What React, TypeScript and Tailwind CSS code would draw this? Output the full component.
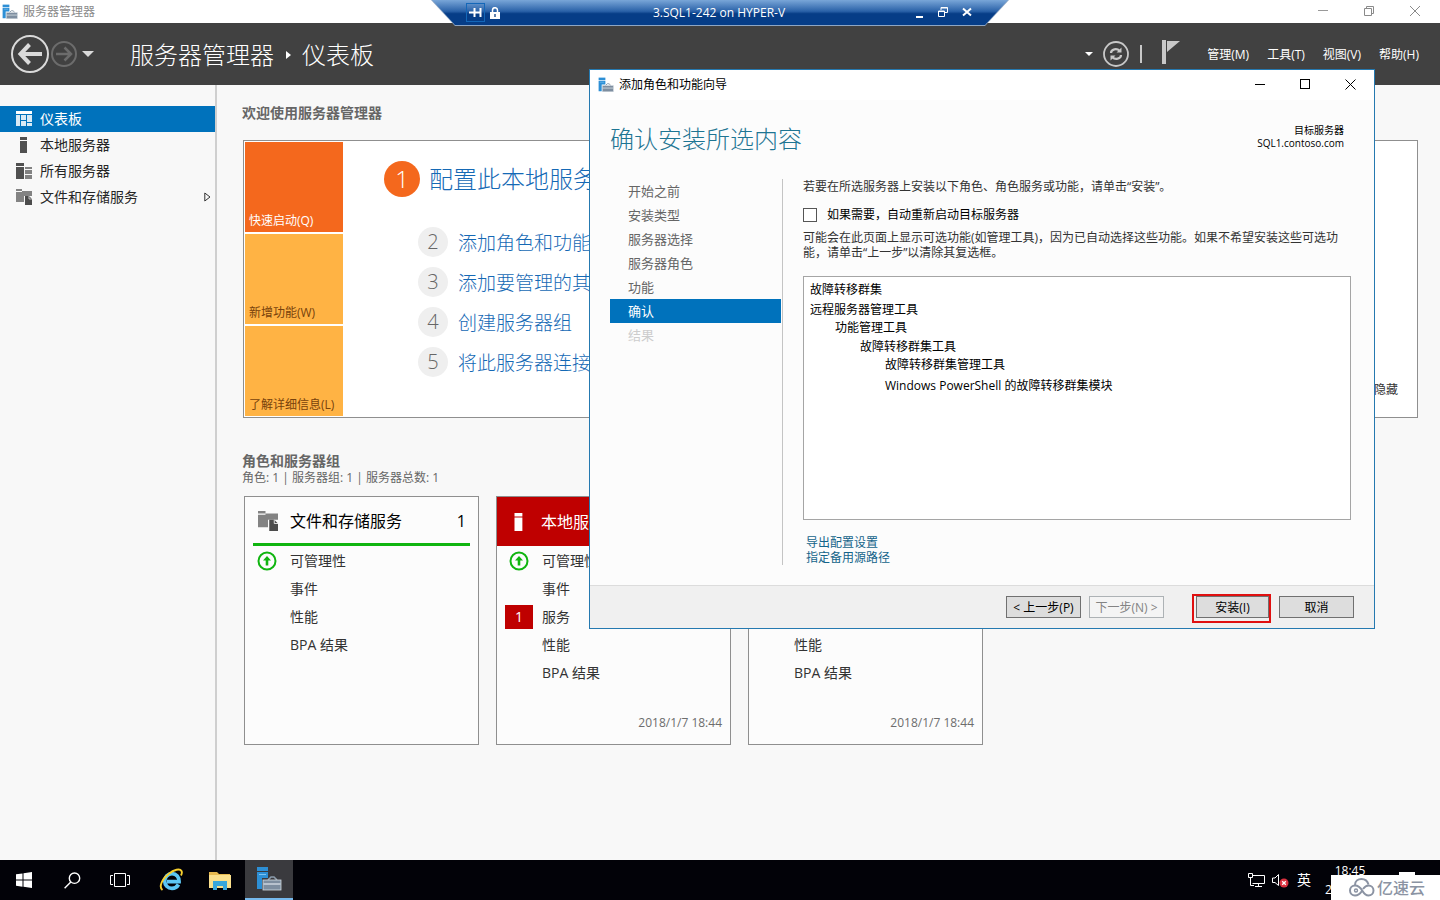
import React from 'react';
import clsx from 'clsx';

interface IconProps {
  className?: string;
}

interface Role {
  title: string;
  count: number;
  icon: 'folder' | 'server' | 'servers';
  failing?: boolean;
  rows: { label: string; status?: 'ok' | number }[];
  updatedAt?: string;
}

const sidebarItems = [
  { label: '仪表板', icon: 'dashboard', active: true },
  { label: '本地服务器', icon: 'server' },
  { label: '所有服务器', icon: 'servers' },
  { label: '文件和存储服务', icon: 'folder', expandable: true },
];

const menus = ['管理(M)', '工具(T)', '视图(V)', '帮助(H)'];

const quickSteps = ['添加角色和功能', '添加要管理的其他服务器', '创建服务器组', '将此服务器连接到云服务'];

const roles: Role[] = [
  {
    title: '文件和存储服务',
    count: 1,
    icon: 'folder',
    rows: [{ label: '可管理性', status: 'ok' }, { label: '事件' }, { label: '性能' }, { label: 'BPA 结果' }],
  },
  {
    title: '本地服务器',
    count: 1,
    icon: 'server',
    failing: true,
    rows: [
      { label: '可管理性', status: 'ok' },
      { label: '事件' },
      { label: '服务', status: 1 },
      { label: '性能' },
      { label: 'BPA 结果' },
    ],
    updatedAt: '2018/1/7 18:44',
  },
  {
    title: '所有服务器',
    count: 1,
    icon: 'servers',
    failing: true,
    rows: [
      { label: '可管理性', status: 'ok' },
      { label: '事件' },
      { label: '服务', status: 1 },
      { label: '性能' },
      { label: 'BPA 结果' },
    ],
    updatedAt: '2018/1/7 18:44',
  },
];

const wizardSteps = ['开始之前', '安装类型', '服务器选择', '服务器角色', '功能', '确认', '结果'];

const selections = [
  { label: '故障转移群集', className: '' },
  { label: '远程服务器管理工具', className: 'mt-0.5' },
  { label: '功能管理工具', className: 'pl-[25px]' },
  { label: '故障转移群集工具', className: 'pl-[50px] mt-px' },
  { label: '故障转移群集管理工具', className: 'pl-[75px]' },
  { label: 'Windows PowerShell 的故障转移群集模块', className: 'pl-[75px] mt-[3px]' },
];

function ServerManagerIcon({ className }: IconProps) {
  return (
    <svg viewBox="0 0 26 26" className={className} aria-hidden="true">
      <rect x="1" y="1" width="11" height="4" fill="#2d8fd5" />
      <path d="M1 6h11v6H6v11H1z" fill="#2d8fd5" />
      <path d="M3 8.500h7" stroke="#7cc3f2" />
      <path d="M12 14l3-3h3l3 3" fill="none" stroke="#8c9cac" strokeWidth="1.600" />
      <rect x="7" y="14" width="18" height="10" fill="#7e8ea0" stroke="#d3dbe2" strokeWidth="0.800" />
      <path d="M7.500 18h17" stroke="#dfe6ec" strokeWidth="1.200" />
    </svg>
  );
}

function NodeIcon({ name, className }: IconProps & { name: string }) {
  if (name === 'dashboard') {
    return (
      <svg viewBox="0 0 16 16" className={className} fill="currentColor" aria-hidden="true">
        <path d="M0 0h16v3H0z" />
        <path d="M0 4h4v11H0zM5 4h5v5H5zM5 10h5v5H5zM11 4h5v7h-5zM11 12h5v3h-5z" opacity=".85" />
      </svg>
    );
  }
  if (name === 'server') {
    return (
      <svg viewBox="0 0 16 16" className={className} fill="currentColor" aria-hidden="true">
        <path d="M4 0h7v3H4zM4 4h7v12H4z" />
      </svg>
    );
  }
  if (name === 'servers') {
    return (
      <svg viewBox="0 0 16 16" className={className} fill="currentColor" aria-hidden="true">
        <path d="M0 0h8v3H0zM0 4h8v12H0z" />
        <path d="M9 4h7v2H9zM9 7h7v4H9zM9 12h7v4H9z" opacity=".7" />
      </svg>
    );
  }
  return (
    <svg viewBox="0 0 16 16" className={className} aria-hidden="true">
      <path d="M0 0h6v2H0zM0 3h6V2h10v5H8v6H0z" fill="#838383" />
      <path d="M9 7h4l3 3v6H9z" fill="#4c4c4c" />
      <path d="M13 7v3h3" fill="none" stroke="#f0f0f0" strokeWidth=".7" />
    </svg>
  );
}

function OkIcon() {
  return (
    <svg viewBox="0 0 20 20" className="h-5 w-5" fill="none" aria-hidden="true">
      <circle cx="10" cy="10" r="8.500" stroke="#10b510" strokeWidth="2" />
      <path d="M10 5l4 4.500h-2.700V14.500H8.700V9.500H6z" fill="#10b510" />
    </svg>
  );
}

function ConnectionBar() {
  return (
    <div className="absolute left-1/2 top-0 z-20 h-[26px] w-[578px] -translate-x-1/2 bg-[#8ea6c4] [clip-path:polygon(0_0,100%_0,calc(100%-24px)_100%,24px_100%)]">
      <div className="flex h-[25px] items-center bg-linear-to-b from-[#79a6d8] from-0% via-[#2a62a8] via-45% to-[#063d87] to-55% pl-[35px] pr-[37px] text-white [clip-path:polygon(1px_0,calc(100%-1px)_0,calc(100%-24px)_100%,24px_100%)]">
        <button aria-label="固定" className="flex h-[19px] w-[19px] items-center justify-center border border-[#1467b8]">
          <svg viewBox="0 0 13 11" className="h-[11px] w-[13px]" stroke="currentColor" strokeWidth="2" fill="none">
            <path d="M0 5.500h5M5.500 1v9M5.500 5.500h5M11.500 1v9" />
          </svg>
        </button>
        <svg viewBox="0 0 10 12" className="ml-[5px] h-3 w-2.5" aria-hidden="true">
          <path d="M2.500 6V3.200a2.500 2.500 0 015 0V6" fill="none" stroke="#fff" strokeWidth="1.500" />
          <path d="M0 5h10v7H0z" fill="#fff" />
          <path d="M4.300 7h1.400v3H4.300z" fill="#1d4d8c" />
        </svg>
        <span className="flex-1 pl-[22px] text-center text-xs">3.SQL1-242 on HYPER-V</span>
        <div className="flex items-center gap-3.5 pb-0.5">
          <button aria-label="最小化" className="flex h-3 w-2 items-end">
            <span className="h-0.5 w-[7px] bg-white" />
          </button>
          <button aria-label="还原">
            <svg viewBox="0 0 10 10" className="h-2.5 w-2.5" fill="none" stroke="currentColor">
              <path d="M3 3V.500h6.500v5H7" />
              <path d="M.500 4h6v5.500h-6zM3 1h6.500M.500 4.500h6" />
            </svg>
          </button>
          <button aria-label="关闭">
            <svg viewBox="0 0 10 10" className="h-2.5 w-2.5" stroke="currentColor" strokeWidth="2">
              <path d="M1 1.500l8 7M9 1.500l-8 7" />
            </svg>
          </button>
        </div>
      </div>
    </div>
  );
}

function TitleBar() {
  return (
    <div className="flex h-[23px] items-center bg-white pl-0.5 pr-5 text-[#8a8a8a]">
      <ServerManagerIcon className="h-4 w-4" />
      <span className="ml-[5px] flex-1 text-xs">服务器管理器</span>
      <div className="flex items-center gap-9 pb-0.5">
        <button aria-label="最小化" className="flex h-2.5 w-2.5 items-center">
          <span className="h-px w-2.5 bg-[#999]" />
        </button>
        <button aria-label="还原">
          <svg viewBox="0 0 10 10" className="h-2.5 w-2.5" fill="none" stroke="currentColor">
            <path d="M2.500 2V.500h7v7H8M.500 2.500h7v7h-7z" />
          </svg>
        </button>
        <button aria-label="关闭">
          <svg viewBox="0 0 10 10" className="h-2.5 w-2.5" stroke="currentColor">
            <path d="M0 0l10 10M10 0L0 10" />
          </svg>
        </button>
      </div>
    </div>
  );
}

function Header() {
  return (
    <header className="flex h-[62px] items-center bg-[#414141] pl-[11px] pr-[21px] text-white">
      <button aria-label="后退">
        <svg viewBox="0 0 38 38" className="h-[38px] w-[38px]" fill="none" stroke="#dadada">
          <circle cx="19" cy="19" r="18" strokeWidth="2" />
          <path d="M9 19h22" strokeWidth="4" />
          <path d="M18.500 9.500L9.500 19l9 9.500" strokeWidth="4" />
        </svg>
      </button>
      <button aria-label="前进" className="ml-0.5">
        <svg viewBox="0 0 26 26" className="h-[26px] w-[26px]" fill="none" stroke="#6c6c6c">
          <circle cx="13" cy="13" r="12" strokeWidth="2" />
          <path d="M5 13h15M13.500 6.500L20 13l-6.500 6.500" strokeWidth="2.500" />
        </svg>
      </button>
      <button aria-label="历史记录" className="ml-[5px]">
        <svg viewBox="0 0 12 6" className="h-1.5 w-3" fill="#dadada">
          <path d="M0 0h12L6 6z" />
        </svg>
      </button>
      <div className="ml-9 flex flex-1 items-center pt-0.5 text-2xl font-light">
        <span>服务器管理器</span>
        <svg viewBox="0 0 5 8" className="ml-3 mr-[11px] h-2 w-[5px]" fill="currentColor" aria-hidden="true">
          <path d="M0 0l5 4-5 4z" />
        </svg>
        <h1>仪表板</h1>
      </div>
      <svg viewBox="0 0 8 4" className="h-1 w-2" fill="currentColor" aria-hidden="true">
        <path d="M0 0h8L4 4z" />
      </svg>
      <button aria-label="刷新" className="ml-2.5">
        <svg viewBox="0 0 26 26" className="h-[26px] w-[26px]" fill="none" stroke="#c8c8c8">
          <circle cx="13" cy="13" r="12" strokeWidth="1.800" />
          <path d="M8 12c0-4 6-5 8.500-2.200M18 14c0 4-6 5-8.500 2.200" strokeWidth="2.200" />
          <path d="M18.500 6.500v5h-5zM7.500 19.500v-5h5z" fill="#c8c8c8" stroke="none" />
        </svg>
      </button>
      <span className="ml-[11px] h-[18px] w-0.5 bg-[#c8c8c8]" />
      <button aria-label="通知" className="ml-5 pb-1">
        <svg viewBox="0 0 18 24" className="h-6 w-[18px]" fill="#c8c8c8">
          <path d="M0 0h4v24H0zM5 1h13L5 12z" />
        </svg>
      </button>
      <nav className="ml-[27px] flex gap-[18px] pt-0.5 text-xs">
        {menus.map((menu) => (
          <button key={menu}>{menu}</button>
        ))}
      </nav>
    </header>
  );
}

function Sidebar() {
  return (
    <aside className="w-[217px] flex-shrink-0 border-r-2 border-[#cfcfcf] pt-[21px]">
      {sidebarItems.map((item) => (
        <a
          key={item.label}
          href="#"
          className={clsx(
            'flex h-[26px] items-center pl-4 pr-1 text-sm',
            item.active ? 'bg-[#0072bc] text-white' : 'text-[#262626]'
          )}
        >
          <NodeIcon name={item.icon} className={clsx('h-4 w-4', !item.active && 'text-[#505050]')} />
          <span className="ml-2 flex-1">{item.label}</span>
          {item.expandable && (
            <svg viewBox="0 0 7 10" className="h-2.5 w-[7px]" fill="none" stroke="#333" aria-hidden="true">
              <path d="M.800 1L6 5 .800 9z" />
            </svg>
          )}
        </a>
      ))}
    </aside>
  );
}

function WelcomePanel() {
  return (
    <div className="ml-px mt-4 flex border border-[#8f8f8f] bg-white p-px">
      <div className="flex w-[98px] flex-shrink-0 flex-col gap-0.5 text-xs">
        <button className="flex h-[90px] items-end bg-[#f4681d] px-1 pb-[3px] text-left text-white">快速启动(Q)</button>
        <button className="flex h-[90px] items-end bg-[#ffb344] px-1 pb-[3px] text-left text-[#77420c]">新增功能(W)</button>
        <button className="flex h-[90px] items-end bg-[#ffb344] px-1 pb-[3px] text-left text-[#77420c]">
          了解详细信息(L)
        </button>
      </div>
      <div className="ml-[41px] flex-1 pt-[19px] font-light text-[#1569b5]">
        <div className="flex items-center">
          <span className="flex h-9 w-9 items-center justify-center rounded-full bg-[#f4681d] text-2xl text-white">1</span>
          <a href="#" className="ml-[9px] text-2xl">
            配置此本地服务器
          </a>
        </div>
        <ol className="ml-[34px] mt-[30px] space-y-2.5">
          {quickSteps.map((step, index) => (
            <li key={step} className="flex h-[30px] items-center">
              <span className="flex h-[30px] w-[30px] items-center justify-center rounded-full bg-[#efefef] text-xl text-[#666]">
                {index + 2}
              </span>
              <a href="#" className="ml-2.5 pt-0.5 text-[19px]">
                {step}
              </a>
            </li>
          ))}
        </ol>
      </div>
      <button className="mb-[18px] mr-[18px] self-end text-xs text-[#333]">隐藏</button>
    </div>
  );
}

function RoleCard({ role }: { role: Role }) {
  return (
    <section className="flex h-[249px] w-[235px] flex-shrink-0 flex-col border border-[#8f8f8f] bg-[#fcfcfc]">
      <div
        className={clsx(
          'flex items-center',
          role.failing
            ? 'h-[49px] bg-[#bf0000] px-3 text-white'
            : 'mx-2 h-[49px] border-b-[3px] border-[#10b510] pl-[5px] pr-1 pt-0.5 text-black'
        )}
      >
        <NodeIcon name={role.icon} className={role.icon === 'folder' ? 'h-5 w-5' : 'h-[18px] w-5'} />
        <h3 className="ml-3 flex-1 text-base">{role.title}</h3>
        <span className="text-base">{role.count}</span>
      </div>
      <ul className="flex-1 px-2 pt-px text-sm text-[#333]">
        {role.rows.map((row) => (
          <li key={row.label} className="flex h-7 items-center">
            <span className="flex w-7 justify-center">
              {row.status === 'ok' && <OkIcon />}
              {typeof row.status === 'number' && (
                <span className="flex h-6 w-7 items-center justify-center bg-[#bf0000] text-white">{row.status}</span>
              )}
            </span>
            <span className="ml-[9px]">{row.label}</span>
          </li>
        ))}
      </ul>
      {role.updatedAt && <p className="pb-[13px] pr-2 text-right text-xs leading-4 text-[#6d6d6d]">{role.updatedAt}</p>}
    </section>
  );
}

function AddRolesWizard() {
  return (
    <div
      role="dialog"
      aria-label="添加角色和功能向导"
      className="absolute right-[65px] top-[69px] z-10 flex h-[560px] w-[786px] flex-col border border-[#2579b0] bg-[#fcfcfc] text-xs text-black"
    >
      <div className="flex h-[30px] flex-shrink-0 items-center bg-white pl-2 pr-[18px]">
        <ServerManagerIcon className="h-4 w-4" />
        <span className="ml-[5px] flex-1">添加角色和功能向导</span>
        <div className="flex items-center gap-[35px] pb-0.5">
          <button aria-label="最小化" className="flex h-2.5 w-2.5 items-center">
            <span className="h-px w-2.5 bg-black" />
          </button>
          <button aria-label="最大化" className="h-2.5 w-2.5 border border-black" />
          <button aria-label="关闭">
            <svg viewBox="0 0 11 11" className="h-[11px] w-[11px]" stroke="currentColor">
              <path d="M.500.500l10 10M10.500.500l-10 10" />
            </svg>
          </button>
        </div>
      </div>

      <div className="flex items-start justify-between pl-5 pr-[30px]">
        <h2 className="pt-[23px] text-2xl font-light text-[#1e7593]">确认安装所选内容</h2>
        <div className="pt-6 text-right">
          <p className="text-[10px] leading-[13px]">目标服务器</p>
          <p className="text-[10px] leading-[13px]">SQL1.contoso.com</p>
        </div>
      </div>

      <div className="mt-6 flex flex-1 pb-5 pl-5 pr-[23px]">
        <ol className="w-[173px] flex-shrink-0 border-r border-[#c4c4c4] pr-px text-[13px] text-[#666]">
          {wizardSteps.map((step) => (
            <li
              key={step}
              className={clsx(
                'flex h-6 items-center pl-[18px] pt-0.5',
                step === '确认' && 'bg-[#0072bc] text-white',
                step === '结果' && 'text-[#cdcdcd]'
              )}
            >
              {step}
            </li>
          ))}
        </ol>
        <div className="ml-5 flex flex-1 flex-col text-[#333]">
          <p className="leading-[15px]">若要在所选服务器上安装以下角色、角色服务或功能，请单击“安装”。</p>
          <label className="mt-3 flex h-[17px] items-center text-black">
            <input type="checkbox" className="h-3.5 w-3.5 appearance-none border border-[#555] bg-white" />
            <span className="ml-2.5">如果需要，自动重新启动目标服务器</span>
          </label>
          <p className="mt-[7px] pr-2 leading-[15px]">
            可能会在此页面上显示可选功能(如管理工具)，因为已自动选择这些功能。如果不希望安装这些可选功能，请单击“上一步”以清除其复选框。
          </p>
          <ul className="mt-4 h-[244px] border border-[#a5a5a5] bg-white px-1.5 py-1 leading-[18px] text-black">
            {selections.map((item) => (
              <li key={item.label} className={item.className}>
                {item.label}
              </li>
            ))}
          </ul>
          <div className="ml-[3px] mt-[15px] flex flex-col items-start leading-[15px] text-[#14648a]">
            <a href="#">导出配置设置</a>
            <a href="#">指定备用源路径</a>
          </div>
        </div>
      </div>

      <footer className="flex h-[43px] flex-shrink-0 items-start justify-end border-t border-[#dcdcdc] bg-[#f0f0f0] pr-5 pt-2">
        <button className="mt-0.5 h-[22px] w-[75px] border border-[#707070] bg-[#dddddd] pt-0.5">&lt; 上一步(P)</button>
        <button
          disabled
          className="ml-2 mt-0.5 h-[22px] w-[75px] border border-[#adb2b5] bg-[#f4f4f4] pt-0.5 text-[#838383]"
        >
          下一步(N) &gt;
        </button>
        <div className="ml-7 h-[29px] w-[79px] border-2 border-[#e01010] pl-0.5">
          <button className="h-[22px] w-full border border-[#707070] bg-[#dddddd] pt-0.5">安装(I)</button>
        </div>
        <button className="ml-2 mt-0.5 h-[22px] w-[75px] border border-[#707070] bg-[#dddddd] pt-0.5">取消</button>
      </footer>
    </div>
  );
}

function Taskbar() {
  return (
    <div className="flex h-10 flex-shrink-0 items-center bg-[#020208] text-white">
      <button aria-label="开始" className="flex h-10 w-12 items-center justify-center">
        <svg viewBox="0 0 16 16" className="h-4 w-4" fill="currentColor">
          <path d="M0 2.300L6.500 1.400v6.200H0zM7.500 1.200L16 0v7.600H7.500zM0 8.500h6.500v6.200L0 13.800zM7.500 8.500H16V16l-8.500-1.200z" />
        </svg>
      </button>
      <button aria-label="搜索" className="flex h-10 w-12 items-center justify-center">
        <svg viewBox="0 0 17 17" className="h-[17px] w-[17px]" fill="none" stroke="currentColor" strokeWidth="1.400">
          <circle cx="10.500" cy="6.200" r="5.200" />
          <path d="M6.800 10L.600 16.300" />
        </svg>
      </button>
      <button aria-label="任务视图" className="flex h-10 w-12 items-center justify-center">
        <svg viewBox="0 0 20 14" className="h-3.5 w-5" fill="none" stroke="currentColor">
          <path d="M4.500.500h11v13h-11zM3 2.500H.500v9H3M17 2.500h2.500v9H17" />
        </svg>
      </button>
      <button aria-label="Internet Explorer" className="flex h-10 w-[54px] items-center justify-center">
        <svg viewBox="0 0 24 24" className="h-6 w-6" fill="none">
          <path d="M19.500 16.500c-1.300 2.400-3.700 3.800-6.500 3.800-4.300 0-7.300-3.200-7.300-7.200S8.800 5.700 13 5.700c4.400 0 7.300 3.200 7.100 8H8" stroke="#5cc8f5" strokeWidth="3.700" />
          <path d="M3.500 22C-.500 19 3 11 9.500 6 15 1.500 21 .300 22.500 3c.700 1.300.300 3-.500 4.500" stroke="#f6cf2e" strokeWidth="1.900" />
        </svg>
      </button>
      <button aria-label="文件资源管理器" className="flex h-10 w-[47px] items-center justify-center pr-1">
        <svg viewBox="0 0 22 19" className="h-[19px] w-[22px]">
          <path d="M0 1h8l2 2h11v4H0z" fill="#e7b94f" />
          <path d="M0 4h22v13H0z" fill="#fbe08d" />
          <path d="M4 10h14v9h-4v-4H8v4H4z" fill="#3aa7dc" />
        </svg>
      </button>
      <button
        aria-label="服务器管理器"
        className="flex h-10 w-12 items-center justify-center border-b-2 border-[#76b9ed] bg-[#3a3a3e]"
      >
        <ServerManagerIcon className="h-[26px] w-[26px]" />
      </button>
      <div className="ml-auto flex h-10 items-center">
        <svg viewBox="0 0 17 15" className="h-[15px] w-[17px]" fill="none" stroke="currentColor" aria-hidden="true">
          <path d="M4 2.500h12.500v8H4.500M10.500 10.500v3M7 13.500h7M.500.500h4v4h-4zM2.500 4.500v8H6" />
        </svg>
        <svg viewBox="0 0 17 15" className="ml-[7px] h-[15px] w-[17px]" fill="none" aria-hidden="true">
          <path d="M.500 5H3l3.500-3.500v11L3 9.500H.500z" stroke="#fff" />
          <circle cx="12" cy="10" r="4.500" fill="#d9303e" />
          <path d="M10.200 8.200l3.600 3.600M13.800 8.200l-3.600 3.600" stroke="#fff" strokeWidth="1.300" />
        </svg>
        <span className="ml-2 text-sm">英</span>
        <div className="ml-3.5 text-center text-xs leading-[19px]">
          <p>18:45</p>
          <p>2018/1/7</p>
        </div>
        <svg viewBox="0 0 16 16" className="ml-6 mr-[25px] h-4 w-4" fill="currentColor" aria-hidden="true">
          <path d="M0 0h16v12H9l-3 4v-4H0z" />
        </svg>
      </div>
    </div>
  );
}

function Watermark() {
  return (
    <div className="absolute bottom-0 right-0 z-20 flex h-[25px] w-[109px] items-center bg-white pl-[18px] text-[#8b93a3]">
      <svg viewBox="0 0 26 19" className="h-[19px] w-[26px]" fill="none" stroke="currentColor" strokeWidth="2" aria-hidden="true">
        <path d="M6 7C6 3 9 1 12.500 1S18.500 3 19.500 6.500" />
        <path d="M13 13c-2 3-4 4.500-7 4.500a5 5 0 010-10c4 0 6 3 7.500 5.500s3 4.500 6 4.500a5 5 0 000-10c-2.500 0-4 1.500-5.500 3.500" />
        <circle cx="7" cy="12.500" r="1.500" strokeWidth="1.400" />
      </svg>
      <span className="ml-0.5 text-base font-medium leading-5">亿速云</span>
    </div>
  );
}

export default function App() {
  return (
    <div className="relative flex min-h-screen flex-col overflow-hidden bg-[#f8f8f8] font-['Open_Sans','Noto_Sans_CJK_SC',sans-serif]">
      <ConnectionBar />
      <TitleBar />
      <Header />
      <div className="flex flex-1">
        <Sidebar />
        <main className="min-w-0 flex-1 pl-[25px] pr-[22px] pt-[17px]">
          <h2 className="text-sm font-semibold leading-[22px] text-[#666]">欢迎使用服务器管理器</h2>
          <WelcomePanel />
          <div className="mt-[34px] text-[#666]">
            <h2 className="text-sm font-semibold leading-[18px]">角色和服务器组</h2>
            <p className="text-xs leading-4">角色: 1 | 服务器组: 1 | 服务器总数: 1</p>
          </div>
          <div className="ml-0.5 mt-2.5 flex gap-[17px]">
            {roles.map((role) => (
              <RoleCard key={role.title} role={role} />
            ))}
          </div>
        </main>
      </div>
      <Taskbar />
      <AddRolesWizard />
      <Watermark />
    </div>
  );
}
